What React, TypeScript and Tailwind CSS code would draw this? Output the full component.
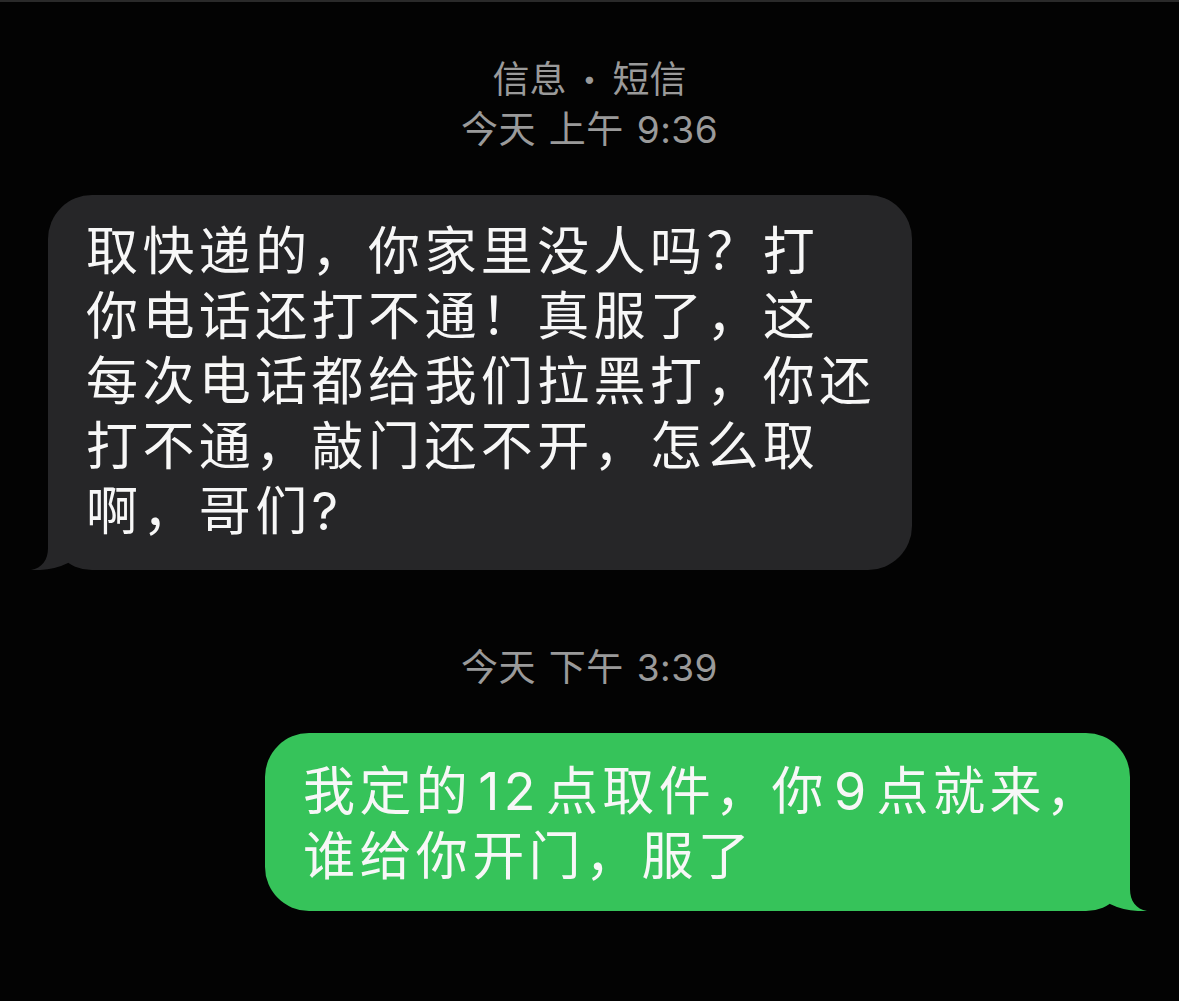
import React from 'react';

type Side = 'left' | 'right';

interface Message {
  side: Side;
  lines: string[];
}

const incoming: Message = {
  side: 'left',
  lines: [
    '取快递的，你家里没人吗？打',
    '你电话还打不通！真服了，这',
    '每次电话都给我们拉黑打，你还',
    '打不通，敲门还不开，怎么取',
    '啊，哥们?',
  ],
};

const outgoing: Message = {
  side: 'right',
  lines: ['我定的 12 点取件，你 9 点就来，', '谁给你开门，服了'],
};

// little curled tail under the bubble corner
const Tail = ({ side, color }: { side: Side; color: string }) => (
  <svg
    viewBox="0 0 50 50"
    className={
      side === 'left'
        ? 'absolute left-[-20px] bottom-0 w-[50px] h-[50px]'
        : 'absolute right-[-20px] bottom-0 w-[50px] h-[50px] scale-x-[-1]'
    }
  >
    <path d="M20 2 L20 28 C20 40 14 48 3 50 Q24 51 40 43 L40 2 Z" fill={color} />
  </svg>
);

const Timestamp = ({ children }: { children: React.ReactNode }) => (
  <p className="text-center text-[37px] leading-[50px] tracking-[0.5px] [word-spacing:2px] text-[#9a9a9a]">
    {children}
  </p>
);

const Bubble = ({ msg }: { msg: Message }) => {
  const isLeft = msg.side === 'left';
  const color = isLeft ? '#262628' : '#36c35a';
  return (
    <div
      className={
        isLeft
          ? 'relative ml-[48px] w-[864px] rounded-[44px] bg-[#262628] pl-[38px] pr-[38px] pt-[24px] pb-[26px]'
          : 'relative ml-auto mr-[49px] w-[865px] rounded-[44px] bg-[#36c35a] pl-[38px] pr-[38px] pt-[26px] pb-[22px]'
      }
    >
      <Tail side={msg.side} color={color} />
      <div className="relative text-[52px] leading-[65px] tracking-[4.4px] [word-spacing:-13px] text-[#f7f7f7] whitespace-nowrap">
        {msg.lines.map((line, i) => (
          <div key={i}>{line}</div>
        ))}
      </div>
    </div>
  );
};

const App = () => {
  return (
    <div className="min-h-[1001px] bg-[#030303] border-t-2 border-[#2a2a2a] font-['Inter','Noto_Sans_CJK_SC',sans-serif]">
      <div className="pt-[53px]">
        <p className="text-center text-[37px] leading-[50px] text-[#9a9a9a]">
          信息<span className="mx-[16px] font-black">·</span>短信
        </p>
        <Timestamp>今天 上午 9:36</Timestamp>
      </div>

      <div className="mt-[40px]">
        <Bubble msg={incoming} />
      </div>

      <div className="mt-[73px]">
        <Timestamp>今天 下午 3:39</Timestamp>
      </div>

      <div className="mt-[40px]">
        <Bubble msg={outgoing} />
      </div>
    </div>
  );
};

export default App;
